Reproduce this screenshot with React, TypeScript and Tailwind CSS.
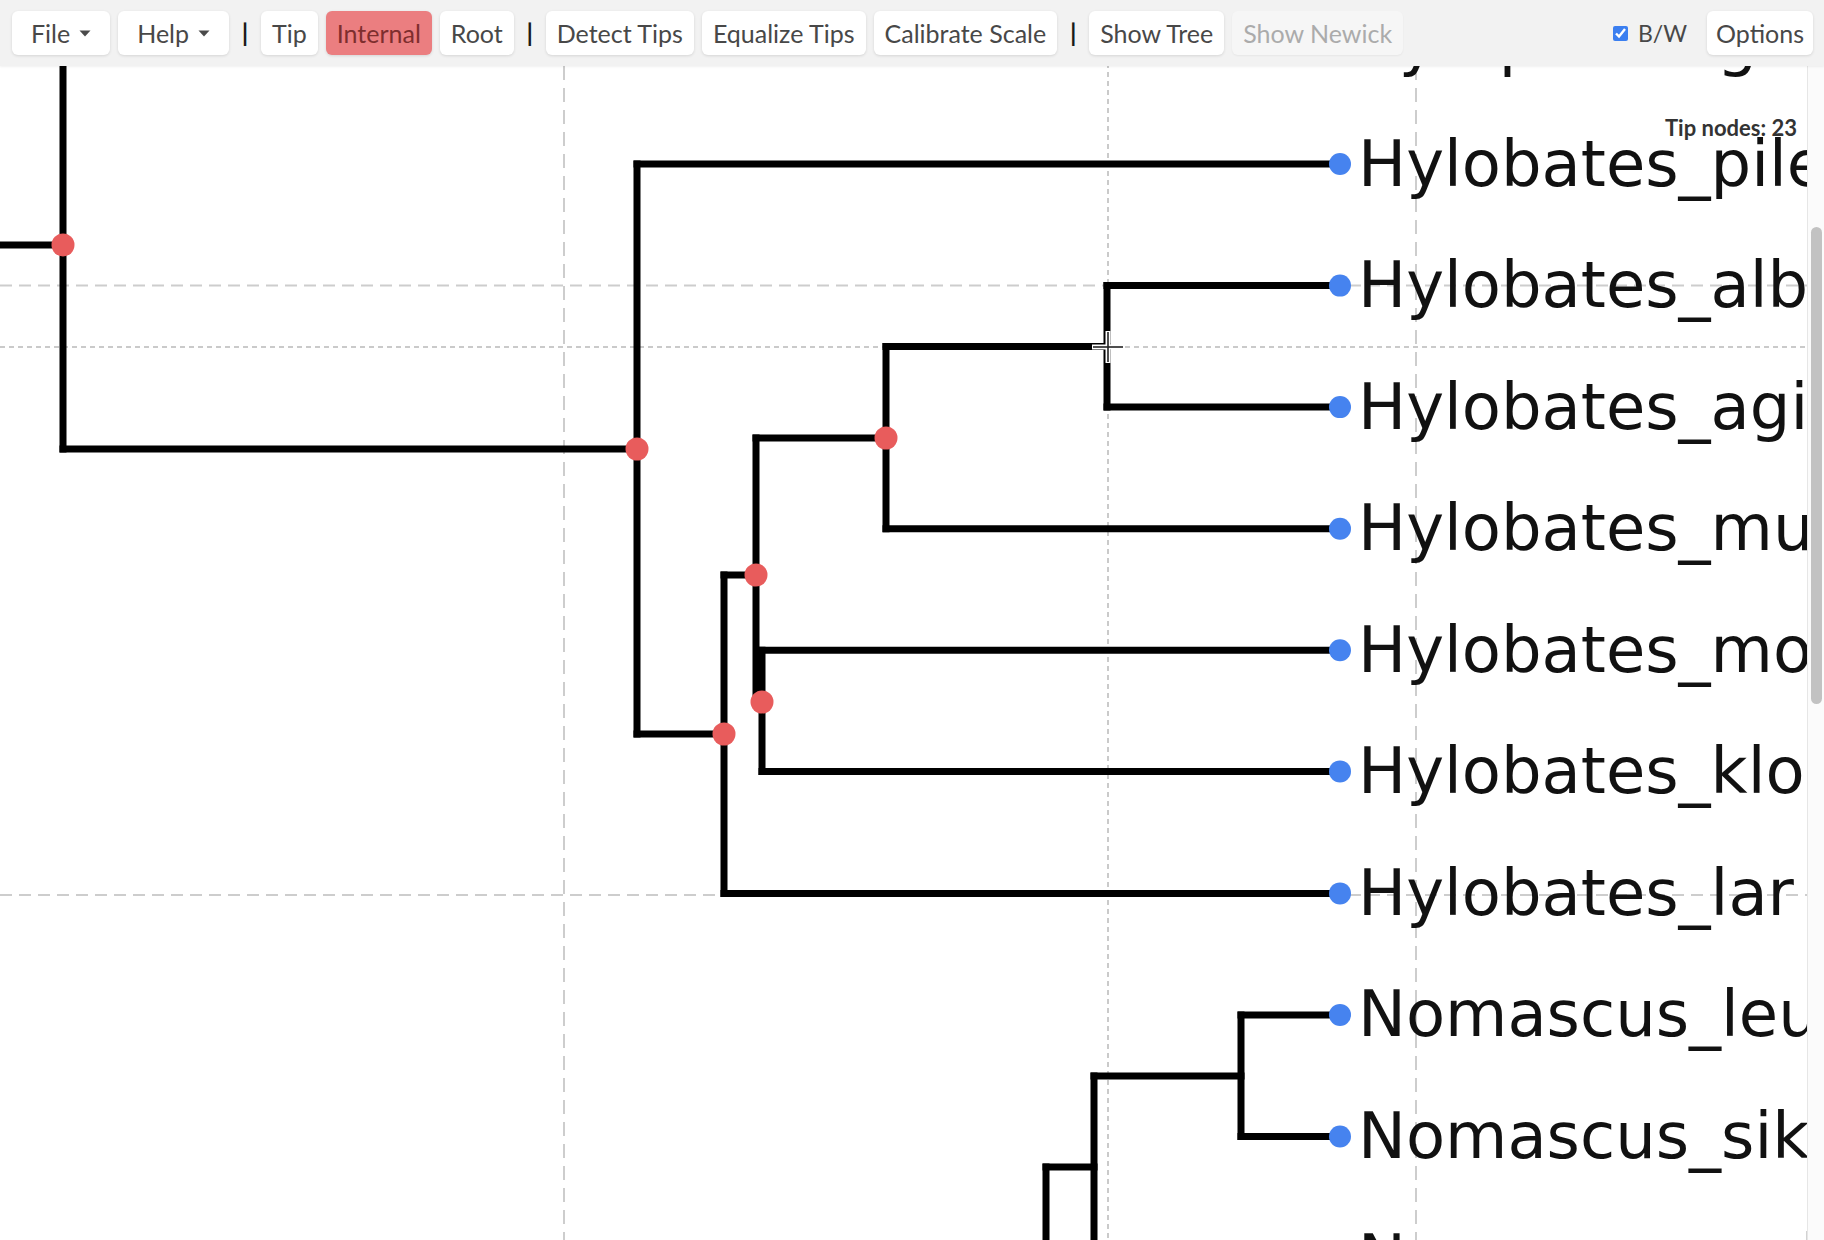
import React from 'react'

const TIP_X = 1340
const LABEL_X = 1358

// tip rows, page coordinates
const tips = [
  { y: 42.5, name: 'Symphalangus_syndactylus' },
  { y: 164, name: 'Hylobates_pileatus' },
  { y: 285.6, name: 'Hylobates_albibarbis' },
  { y: 407.1, name: 'Hylobates_agilis' },
  { y: 528.7, name: 'Hylobates_muelleri' },
  { y: 650.2, name: 'Hylobates_moloch' },
  { y: 771.4, name: 'Hylobates_klossii' },
  { y: 893.4, name: 'Hylobates_lar' },
  { y: 1014.9, name: 'Nomascus_leucogenys' },
  { y: 1136.5, name: 'Nomascus_siki' },
  { y: 1258, name: 'Nomascus_gabriellae' },
]

// branches as [x1, y1, x2, y2]
const branches: number[][] = [
  [-10, 245, 63, 245],
  [63, 42.5, 63, 449],
  [63, 42.5, TIP_X, 42.5],
  [63, 449, 637, 449],
  [637, 164, 637, 734],
  [637, 164, TIP_X, 164],
  [637, 734, 724, 734],
  [724, 575, 724, 893.4],
  [724, 575, 756, 575],
  [724, 893.4, TIP_X, 893.4],
  [756, 438, 756, 702],
  [756, 438, 886, 438],
  [756, 702, 762, 702],
  [762, 650.2, 762, 771.4],
  [762, 650.2, TIP_X, 650.2],
  [762, 771.4, TIP_X, 771.4],
  [886, 346.4, 886, 528.7],
  [886, 346.4, 1107, 346.4],
  [886, 528.7, TIP_X, 528.7],
  [1107, 285.6, 1107, 407.1],
  [1107, 285.6, TIP_X, 285.6],
  [1107, 407.1, TIP_X, 407.1],
  // Nomascus
  [1241, 1014.9, 1241, 1136.5],
  [1241, 1014.9, TIP_X, 1014.9],
  [1241, 1136.5, TIP_X, 1136.5],
  [1094, 1076, 1094, 1258],
  [1094, 1076, 1241, 1076],
  [1094, 1258, TIP_X, 1258],
  [1046, 1167, 1046, 1400],
  [1046, 1167, 1094, 1167],
]

const internalNodes = [
  [63, 245],
  [637, 449],
  [724, 734],
  [756, 575],
  [762, 702],
  [886, 438],
]

function Caret() {
  return (
    <svg width="12" height="7" viewBox="0 0 12 7" className="ml-[9px]">
      <path d="M0.5 0.5 H11.5 L6 6.5 Z" fill="#4a4a4a" />
    </svg>
  )
}

function Btn({
  children,
  variant = 'default',
  menu = false,
  tight = false,
}: {
  children: React.ReactNode
  variant?: 'default' | 'active' | 'disabled'
  menu?: boolean
  tight?: boolean
}) {
  const pad = menu ? 'px-[19px]' : tight ? 'px-[9px]' : 'px-[11px]'
  const base = `h-[44px] ${pad} flex items-center rounded-[6px] text-[25px] leading-none whitespace-nowrap`
  if (variant === 'active') {
    return <div className={`${base} bg-[#eb7e80] text-[#7e2e2e] shadow-[0_1px_3px_rgba(0,0,0,0.12)]`}>{children}</div>
  }
  if (variant === 'disabled') {
    return <div className={`${base} bg-[#f6f6f6] text-[#ababab] shadow-[0_1px_2px_rgba(0,0,0,0.05)]`}>{children}</div>
  }
  return <div className={`${base} bg-white text-[#484848] shadow-[0_1px_3px_rgba(0,0,0,0.12)]`}>{children}</div>
}

function Sep() {
  return <div className="w-[16px] text-center text-[25px] font-bold text-[#1a1a1a]">|</div>
}

function Tree() {
  return (
    <svg width="1807" height="1174" viewBox="0 66 1807 1174" className="block">
      {/* grid + cursor guides */}
      <g fill="none">
        <line x1="0" y1="285.6" x2="1807" y2="285.6" stroke="#cdcdcd" strokeWidth="2" strokeDasharray="12 7" />
        <line x1="0" y1="895" x2="1807" y2="895" stroke="#cdcdcd" strokeWidth="2" strokeDasharray="12 7" />
        <line x1="564" y1="0" x2="564" y2="1240" stroke="#cdcdcd" strokeWidth="2" strokeDasharray="14 8" />
        <line x1="1416" y1="0" x2="1416" y2="1240" stroke="#cdcdcd" strokeWidth="2" strokeDasharray="14 8" />
        <line x1="0" y1="347" x2="1807" y2="347" stroke="#b9b9b9" strokeWidth="1.5" strokeDasharray="5 4" />
        <line x1="1108" y1="0" x2="1108" y2="1240" stroke="#b9b9b9" strokeWidth="1.5" strokeDasharray="5 4" />
      </g>

      <g stroke="#000" strokeWidth="7" strokeLinecap="square">
        {branches.map((b, i) => (
          <line key={i} x1={b[0]} y1={b[1]} x2={b[2]} y2={b[3]} />
        ))}
      </g>

      {internalNodes.map((n, i) => (
        <circle key={i} cx={n[0]} cy={n[1]} r="11.5" fill="#e85c5c" />
      ))}

      {tips.map((t) => (
        <circle key={t.name} cx={TIP_X} cy={t.y} r="11" fill="#4683ef" />
      ))}

      <g fontFamily='"DejaVu Sans", sans-serif' fontSize="64" fill="#111">
        {tips.map((t) => (
          <text key={t.name} x={LABEL_X} y={t.y + 21.5}>
            {t.name}
          </text>
        ))}
      </g>

      {/* crosshair cursor */}
      <g strokeLinecap="butt">
        <line x1="1092" y1="347" x2="1124" y2="347" stroke="#fff" strokeWidth="5" />
        <line x1="1108" y1="331" x2="1108" y2="363" stroke="#fff" strokeWidth="5" />
        <line x1="1093" y1="347" x2="1123" y2="347" stroke="#222" strokeWidth="1.6" />
        <line x1="1108" y1="332" x2="1108" y2="362" stroke="#222" strokeWidth="1.6" />
      </g>
    </svg>
  )
}

export default function App() {
  return (
    <div className="w-[1824px] h-[1240px] flex flex-col overflow-hidden bg-white font-['Lato','Liberation_Sans',sans-serif]">
      {/* Toolbar */}
      <div className="h-[66px] shrink-0 bg-[#f2f2f2] flex items-center pl-3 pr-[11px] gap-2 shadow-[0_1px_2px_rgba(0,0,0,0.06)] relative z-10">
        <Btn menu>
          File
          <Caret />
        </Btn>
        <Btn menu>
          Help
          <Caret />
        </Btn>
        <Sep />
        <Btn>Tip</Btn>
        <Btn variant="active">Internal</Btn>
        <Btn>Root</Btn>
        <Sep />
        <Btn>Detect Tips</Btn>
        <Btn>Equalize Tips</Btn>
        <Btn>Calibrate Scale</Btn>
        <Sep />
        <Btn>Show Tree</Btn>
        <Btn variant="disabled">Show Newick</Btn>

        <div className="ml-auto flex items-center gap-[20px]">
          <label className="flex items-center gap-[10px] text-[23px] text-[#484848]">
            <input type="checkbox" checked readOnly className="w-[15px] h-[15px] accent-[#3b7ff0]" />
            B/W
          </label>
          <Btn tight>Options</Btn>
        </div>
      </div>

      {/* Canvas */}
      <div className="flex flex-1 min-h-0">
        <div className="relative flex-1 overflow-hidden bg-white">
          <Tree />
          <div className="absolute top-[45px] right-[10px] text-[22px] font-bold text-[#333]">Tip nodes: 23</div>
        </div>
        <div className="w-[17px] shrink-0 bg-[#fbfbfb] border-l border-[#e6e6e6] pt-[161px]">
          <div className="mx-auto w-[11px] h-[477px] rounded-full bg-[#c2c2c2]" />
        </div>
      </div>
    </div>
  )
}
